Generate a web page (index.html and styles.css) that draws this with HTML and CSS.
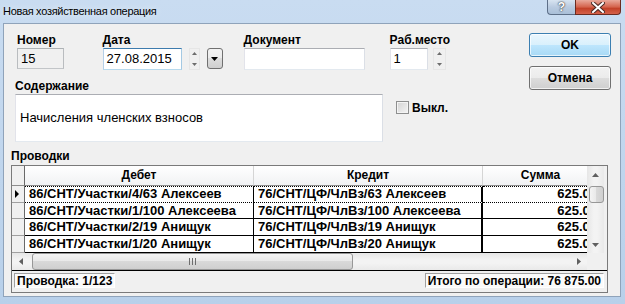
FILE: index.html
```html
<!DOCTYPE html>
<html lang="ru">
<head>
  <meta charset="UTF-8" />
  <title>Новая хозяйственная операция</title>
  <link rel="stylesheet" href="styles.css">
</head>
<body>
  <div class="window">
    <!-- Title bar -->
    <div class="titlebar">
      <span class="title">Новая хозяйственная операция</span>
      <div class="caption">
        <span class="cap-btn cap-help">?</span>
        <span class="cap-btn cap-close">
          <svg width="14" height="11" viewBox="0 0 14 11">
            <path d="M2 1 L12 10 M12 1 L2 10" stroke="#4b2a24" stroke-width="4" stroke-linecap="square"/>
            <path d="M2 1 L12 10 M12 1 L2 10" stroke="#fff" stroke-width="2" stroke-linecap="square"/>
          </svg>
        </span>
      </div>
    </div>

    <div class="client">
      <div class="head">
        <div class="head-left">
          <!-- Top fields -->
          <div class="fields">
            <div class="field f-num">
              <div class="lbl">Номер</div>
              <div class="box box-disabled">15</div>
            </div>
            <div class="field f-date">
              <div class="lbl">Дата</div>
              <div class="ctl-row">
                <div class="box box-focus date-box">27.08.2015</div>
                <div class="spin">
                  <svg width="11" height="22" viewBox="0 0 11 22">
                    <path d="M3 7 L5.5 4 L8 7 Z" fill="#6d6d6d"/>
                    <path d="M3 15 L5.5 18 L8 15 Z" fill="#6d6d6d"/>
                  </svg>
                </div>
                <div class="drop">
                  <svg width="7" height="4" viewBox="0 0 7 4"><path d="M0 0 H7 L3.5 4 Z" fill="#000"/></svg>
                </div>
              </div>
            </div>
            <div class="field f-doc">
              <div class="lbl">Документ</div>
              <div class="box doc-box"></div>
            </div>
            <div class="field f-place">
              <div class="lbl">Раб.место</div>
              <div class="ctl-row">
                <div class="box place-box">1</div>
                <div class="spin spin-place">
                  <svg width="13" height="22" viewBox="0 0 13 22">
                    <path d="M4 7 L6.5 4 L9 7 Z" fill="#6d6d6d"/>
                    <path d="M4 15 L6.5 18 L9 15 Z" fill="#6d6d6d"/>
                  </svg>
                </div>
              </div>
            </div>
          </div>

          <!-- Content -->
          <div class="content">
            <div class="memo-group">
              <div class="lbl">Содержание</div>
              <div class="box memo">Начисления членских взносов</div>
            </div>
            <label class="check">
              <span class="check-box"></span>
              <span class="check-text">Выкл.</span>
            </label>
          </div>
        </div>

        <div class="buttons">
          <div class="btn btn-default">OK</div>
          <div class="btn">Отмена</div>
        </div>
      </div>

      <div class="lbl grid-lbl">Проводки</div>

      <!-- Grid -->
      <div class="grid">
        <div class="grid-main">
          <div class="grid-left">
            <div class="grid-view">
              <div class="g-row g-head">
                <div class="g-ind"></div>
                <div class="g-hc">Дебет</div>
                <div class="g-hc">Кредит</div>
                <div class="g-hc">Сумма</div>
              </div>
              <div class="g-row g-cur">
                <div class="g-ind"><span class="ptr"></span></div>
                <div class="g-c">86/CHT/Участки/4/63 Алексеев</div>
                <div class="g-c g-cred">76/CHT/ЦФ/ЧлВз/63 Алексеев</div>
                <div class="g-c g-sum">625.00</div>
              </div>
              <div class="g-row r16">
                <div class="g-ind"></div>
                <div class="g-c">86/CHT/Участки/1/100 Алексеева</div>
                <div class="g-c g-cred">76/CHT/ЦФ/ЧлВз/100 Алексеева</div>
                <div class="g-c g-sum">625.00</div>
              </div>
              <div class="g-row">
                <div class="g-ind"></div>
                <div class="g-c">86/CHT/Участки/2/19 Анищук</div>
                <div class="g-c g-cred">76/CHT/ЦФ/ЧлВз/19 Анищук</div>
                <div class="g-c g-sum">625.00</div>
              </div>
              <div class="g-row">
                <div class="g-ind"></div>
                <div class="g-c">86/CHT/Участки/1/20 Анищук</div>
                <div class="g-c g-cred">76/CHT/ЦФ/ЧлВз/20 Анищук</div>
                <div class="g-c g-sum">625.00</div>
              </div>
            </div>
            <div class="hscroll">
              <span class="sb-arrow">
                <svg width="4" height="7" viewBox="0 0 4 7"><path d="M4 0 V7 L0 3.5 Z" fill="#606060"/></svg>
              </span>
              <div class="h-track">
                <div class="h-thumb">
                  <svg width="7" height="7" viewBox="0 0 7 7"><path d="M0.5 0 V7 M3.5 0 V7 M6.5 0 V7" stroke="#6e6e6e" stroke-width="1"/></svg>
                </div>
              </div>
              <span class="sb-arrow">
                <svg width="4" height="7" viewBox="0 0 4 7"><path d="M0 0 V7 L4 3.5 Z" fill="#606060"/></svg>
              </span>
            </div>
          </div>
          <div class="vscroll">
            <span class="sb-arrow">
              <svg width="7" height="4" viewBox="0 0 7 4"><path d="M0 4 H7 L3.5 0 Z" fill="#606060"/></svg>
            </span>
            <div class="v-track"><div class="v-thumb"></div></div>
            <span class="sb-arrow">
              <svg width="7" height="4" viewBox="0 0 7 4"><path d="M0 0 H7 L3.5 4 Z" fill="#606060"/></svg>
            </span>
          </div>
        </div>
        <div class="status">
          <span class="panel">Проводка: 1/123</span>
          <span class="panel">Итого по операции: 76 875.00</span>
        </div>
      </div>
    </div>
  </div>
</body>
</html>
```

FILE: styles.css
```css
body {
  margin: 0;
  font-family: "Liberation Sans", Arial, sans-serif;
  color: #000;
}
.window {
  width: 625px;
  height: 304px;
  box-sizing: border-box;
  padding: 0 4px 7px 3px;
  background: linear-gradient(to bottom, #c9dcf1, #b8d0ea);
  display: flex;
  flex-direction: column;
}
.titlebar {
  height: 23px;
  flex-shrink: 0;
  display: flex;
  justify-content: space-between;
}
.title {
  font-size: 11px;
  line-height: 16px;
  padding-top: 3px;
  letter-spacing: -0.3px;
  text-shadow: 0 0 6px #eaf2fb;
}
.caption {
  display: flex;
  height: 15px;
  margin-right: 0;
}
.cap-btn {
  display: flex;
  align-items: center;
  justify-content: center;
  height: 15px;
  box-sizing: border-box;
  border: 1px solid #5d6f88;
  border-top: none;
}
.cap-help {
  width: 28px;
  border-right: none;
  border-radius: 0 0 0 4px;
  background: linear-gradient(to bottom, #d8e4f1, #b9cbe0 50%, #a9bfd8);
  color: #fff;
  font-weight: bold;
  font-size: 12px;
  text-shadow: 0 0 1px #333, 0 0 2px #333;
}
.cap-close {
  width: 46px;
  border-color: #6b2b20;
  border-radius: 0 0 4px 0;
  background: linear-gradient(to bottom, #e9a99b, #d4634c 50%, #c24128 60%, #d5614a);
}
.client {
  flex: 1;
  background: #f0f0f0;
  border: 1px solid #8fa3ba;
}

/* top area */
.head {
  display: flex;
}
.head-left {
  width: 446px;
}
.fields {
  display: flex;
  padding-top: 9px;
}
.lbl {
  font-size: 12px;
  font-weight: bold;
  line-height: 15px;
  height: 15px;
  white-space: nowrap;
}
.ctl-row {
  display: flex;
}
.box {
  box-sizing: border-box;
  background: #fff;
  border: 1px solid;
  border-color: #abadb3 #dbdfe6 #e3e9ef #e2e3ea;
  font-size: 13px;
  line-height: 18px;
  padding: 0 3px;
  white-space: nowrap;
}
.f-num {
  margin-left: 13px;
  width: 51px;
}
.box-disabled {
  height: 21px;
  background: #f0f0f0;
  border-color: #adb2b5 #b9bcbf #c2c5c8 #b9bcbf;
  padding-top: 1px;
  line-height: 18px;
}
.f-date {
  margin-left: 39px;
}
.date-box {
  width: 79px;
  height: 22px;
  padding-top: 1px;
}
.box-focus {
  border-color: #3d7bad #a4c9e3 #b7d9ed #b5cfe7;
}
.spin {
  width: 11px;
  height: 22px;
  margin-left: 7px;
  box-sizing: border-box;
  border: 1px solid #e6e6e6;
}
.spin svg {
  display: block;
  margin: -1px 0 0 -1px;
}
.drop {
  width: 16px;
  height: 21px;
  margin-left: 7px;
  box-sizing: border-box;
  border: 1px solid #707070;
  border-radius: 3px;
  background: linear-gradient(to bottom, #f2f2f2, #ebebeb 50%, #dddddd 50%, #cfcfcf);
  display: flex;
  align-items: center;
  justify-content: center;
}
.f-doc {
  margin-left: 21px;
}
.doc-box {
  width: 121px;
  height: 22px;
}
.f-place {
  margin-left: 25px;
}
.place-box {
  width: 38px;
  height: 22px;
  padding-top: 1px;
}
.spin-place {
  width: 13px;
  margin-left: 5px;
}

.content {
  display: flex;
  margin-top: 9px;
}
.memo-group {
  margin-left: 11px;
}
.memo {
  width: 368px;
  height: 48px;
  padding: 14px 4px 0;
}
.check {
  display: flex;
  align-items: center;
  margin: 22px 0 0 13px;
  height: 13px;
}
.check-box {
  width: 13px;
  height: 13px;
  box-sizing: border-box;
  border: 1px solid #8e8f8f;
  background: linear-gradient(135deg, #d3d3d3, #f4f4f4);
  box-shadow: inset 0 0 0 1px #f4f4f4;
}
.check-text {
  font-size: 12px;
  font-weight: bold;
  margin-left: 3px;
}

.buttons {
  margin-left: 79px;
  padding-top: 9px;
  display: flex;
  flex-direction: column;
  gap: 9px;
}
.btn {
  width: 82px;
  height: 24px;
  box-sizing: border-box;
  border: 1px solid #707070;
  border-radius: 3px;
  background: linear-gradient(to bottom, #f2f2f2, #ebebeb 50%, #dddddd 50%, #cfcfcf);
  box-shadow: inset 0 0 0 1px rgba(255, 255, 255, 0.7);
  font-size: 12px;
  font-weight: bold;
  text-align: center;
  line-height: 22px;
}
.btn-default {
  border-color: #3c7fb1;
  background: linear-gradient(to bottom, #eaf6fd, #d9f0fc 50%, #bee6fd 50%, #a7d9f5);
}

/* grid */
.grid-lbl {
  margin: 7px 0 0 7px;
}
.grid {
  margin: 1px 0 0 7px;
  width: 597px;
  height: 128px;
  box-sizing: border-box;
  border: 1px solid #7a7a7a;
  background: #f0f0f0;
  display: flex;
  flex-direction: column;
}
.grid-main {
  display: flex;
  height: 104px;
}
.grid-left {
  width: 575px;
  display: flex;
  flex-direction: column;
}
.grid-view {
  height: 87px;
  overflow: hidden;
  background: #fff;
}
.g-row {
  display: grid;
  grid-template-columns: 13px 229px 229px 116px;
  width: 587px;
  height: 17px;
}
.g-row.r16 {
  height: 16px;
}
.g-row > div {
  box-sizing: border-box;
  overflow: hidden;
  white-space: nowrap;
}
.g-head {
  height: 20px;
}
.g-ind {
  background: #f0f0f0;
  border-right: 1px solid #696969;
  border-bottom: 1px solid #a0a0a0;
  display: flex;
  align-items: center;
  padding-left: 3px;
}
.g-head .g-ind {
  border-bottom-color: #8d8d8d;
}
.g-hc {
  background: linear-gradient(to bottom, #ffffff, #f1f2f4);
  border-right: 1px solid #d5d5d5;
  border-bottom: 1px solid #8d8d8d;
  font-size: 12px;
  font-weight: bold;
  text-align: center;
  line-height: 19px;
}
.g-c {
  border-right: 1px solid #000;
  border-bottom: 1px solid #000;
  font-size: 13px;
  font-weight: bold;
  line-height: 16px;
  padding-left: 4px;
}
.g-cred {
  border-right-width: 2px;
}
.g-sum {
  text-align: right;
  padding-right: 2px;
  border-right: none;
}
.g-cur .g-c {
  border-top: 1px dotted #000;
  border-bottom: 1px dotted #000;
  line-height: 14px;
}
.g-cur .g-cred {
  border-right: 2px solid #000;
}
.ptr {
  width: 0;
  height: 0;
  border-top: 4px solid transparent;
  border-bottom: 4px solid transparent;
  border-left: 4px solid #000;
}

.sb-arrow {
  width: 17px;
  height: 17px;
  flex-shrink: 0;
  display: flex;
  align-items: center;
  justify-content: center;
}
.hscroll {
  height: 17px;
  display: flex;
  background: linear-gradient(to bottom, #e6e6e6, #f3f3f3 40%, #f3f3f3 60%, #e9e9e9);
}
.h-track {
  flex: 1;
  padding: 0 0 0 3px;
  display: flex;
}
.h-thumb {
  width: 321px;
  height: 17px;
  box-sizing: border-box;
  border: 1px solid #979797;
  border-radius: 3px;
  background: linear-gradient(to bottom, #f4f4f4, #e8e8e8 50%, #d9d9d9 50%, #cfcfcf);
  display: flex;
  align-items: center;
  justify-content: center;
}
.vscroll {
  width: 17px;
  height: 87px;
  display: flex;
  flex-direction: column;
  background: linear-gradient(to right, #e6e6e6, #f3f3f3 40%, #f3f3f3 60%, #e9e9e9);
}
.v-track {
  flex: 1;
  padding-top: 3px;
}
.v-thumb {
  width: 15px;
  height: 17px;
  margin-left: 2px;
  box-sizing: border-box;
  border: 1px solid #979797;
  border-radius: 3px;
  background: linear-gradient(to right, #f4f4f4, #e8e8e8 50%, #d9d9d9 50%, #cfcfcf);
}
.status {
  flex: 1;
  border-top: 1px solid #000;
  display: flex;
  justify-content: space-between;
  align-items: flex-start;
  padding: 2px 3px 0 2px;
}
.panel {
  font-size: 12px;
  font-weight: bold;
  line-height: 13px;
  height: 15px;
  box-sizing: border-box;
  padding: 1px 2px 0;
  background: #fafafa;
  border: 1px solid;
  border-color: #a0a0a0 #ffffff #ffffff #a0a0a0;
  white-space: nowrap;
}
```
